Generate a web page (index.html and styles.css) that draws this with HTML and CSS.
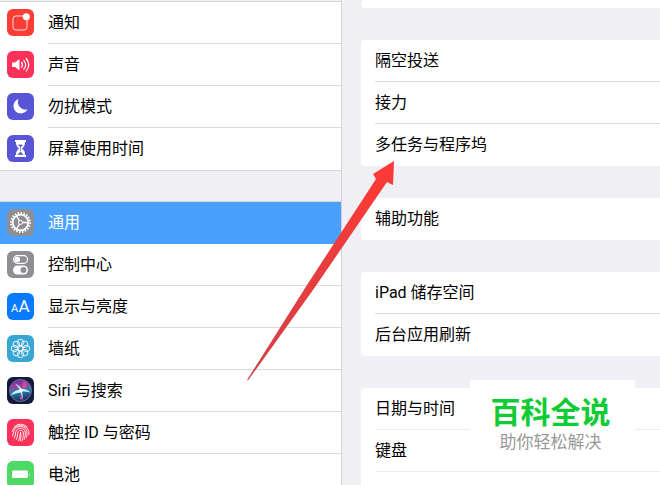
FILE: index.html
```html
<!DOCTYPE html>
<html lang="zh-CN">
<head>
<meta charset="utf-8">
<meta name="viewport" content="width=device-width, initial-scale=1">
<title>设置</title>
<link rel="stylesheet" href="styles.css">
</head>
<body>
<div class="settings">
  <nav class="sidebar">
    <ul class="menu">
      <li><a class="menu-item" href="#">
        <svg class="icon red" viewBox="0 0 27 27"><path d="M16.500 7H9a3 3 0 0 0-3 3v8a3 3 0 0 0 3 3h8a3 3 0 0 0 3-3v-7.500" fill="none" stroke="#fff" stroke-width="1" opacity=".85"/><circle cx="19.300" cy="7.700" r="3.500" fill="#fff"/></svg>
        <span class="label">通知</span></a></li>
      <li><a class="menu-item" href="#">
        <svg class="icon pink" viewBox="0 0 27 27"><path d="M5 11.500h3L12.500 8v11.500L8 16H5z" fill="#fff"/><path d="M14.500 11.300q2 2.400 0 4.900M16.800 9.300q3.600 4.400 0 8.900M19.200 7.500q5 6.200 0 12.500" fill="none" stroke="#fff" stroke-width="1.200" stroke-linecap="round"/></svg>
        <span class="label">声音</span></a></li>
      <li><a class="menu-item" href="#">
        <svg class="icon purple" viewBox="0 0 27 27"><path d="M11.500 6A7.400 7.400 0 1 0 20.500 16.300 7.600 7.600 0 0 1 11.500 6z" fill="#fff"/></svg>
        <span class="label">勿扰模式</span></a></li>
      <li><a class="menu-item" href="#">
        <svg class="icon purple" viewBox="0 0 27 27"><path d="M8 5h11v2h-1c0 3.500-1 5-3 6.500 2 1.500 3 3 3 6.500h1v2H8v-2h1c0-3.500 1-5 3-6.500C10 12 9 10.500 9 7H8z" fill="#fff"/><path d="M11.500 10h4L13.500 12zM13.500 12v4.500M13.500 17l-2.500 2.500h5z" fill="#5856d6" stroke="#5856d6" stroke-width=".7"/></svg>
        <span class="label">屏幕使用时间</span></a></li>
    </ul>
    <ul class="menu">
      <li><a class="menu-item selected" href="#" aria-current="page">
        <svg class="icon gray" viewBox="0 0 27 27"><g fill="none" stroke="#fff"><circle cx="13.500" cy="13.500" r="9.500" stroke-width="2" pathLength="80" stroke-dasharray="2 2"/><circle cx="13.500" cy="13.500" r="7.800" stroke-width="1.800"/><circle cx="13.500" cy="13.500" r="2" stroke-width="1"/><path d="M15.500 13.500H21M12.500 11.800l-3-5M12.500 15.200l-3 5" stroke-width="1.300"/></g></svg>
        <span class="label">通用</span></a></li>
      <li><a class="menu-item" href="#">
        <svg class="icon gray" viewBox="0 0 27 27"><rect x="6.500" y="4.700" width="14" height="7.600" rx="3.800" fill="none" stroke="#fff" stroke-width="1.200"/><circle cx="10.300" cy="8.500" r="2.800" fill="#fff"/><rect x="6" y="14.500" width="15" height="9" rx="4.500" fill="#fff"/><circle cx="16.500" cy="19" r="3" fill="#8e8e93"/></svg>
        <span class="label">控制中心</span></a></li>
      <li><a class="menu-item" href="#">
        <svg class="icon blue" viewBox="0 0 27 27"><text class="glyph-small" x="4" y="19">A</text><text class="glyph-large" x="11.500" y="19">A</text></svg>
        <span class="label">显示与亮度</span></a></li>
      <li><a class="menu-item" href="#">
        <svg class="icon cyan" viewBox="0 0 27 27"><g fill="none" stroke="#fff" stroke-width=".9"><circle cx="13.500" cy="7.500" r="3.200"/><circle cx="17.700" cy="9.300" r="3.200"/><circle cx="19.500" cy="13.500" r="3.200"/><circle cx="17.700" cy="17.700" r="3.200"/><circle cx="13.500" cy="19.500" r="3.200"/><circle cx="9.300" cy="17.700" r="3.200"/><circle cx="7.500" cy="13.500" r="3.200"/><circle cx="9.300" cy="9.300" r="3.200"/><circle cx="13.500" cy="13.500" r="2.400"/></g></svg>
        <span class="label">墙纸</span></a></li>
      <li><a class="menu-item" href="#">
        <svg class="icon navy" viewBox="0 0 27 27"><defs><linearGradient id="orb" x1="0" y1="0" x2=".2" y2="1"><stop offset="0" stop-color="#4b2f98"/><stop offset=".35" stop-color="#a43a9c"/><stop offset=".6" stop-color="#2a7fa8"/><stop offset="1" stop-color="#1c3566"/></linearGradient></defs><circle cx="13.500" cy="13.500" r="11" fill="url(#orb)" stroke="#7b7da5" stroke-width=".8"/><path d="M14 14L16.500 4q4 2 3 5.500z" fill="#df4c9c" opacity=".8"/><path d="M14 14l-1 8 3 1z" fill="#c44fb0"/><path d="M3.500 18.500q4-5.500 9.500-6L8 6.500q5 2.500 6.500 5.500 5-.5 9 3.500-5-1.500-8.500-1l1 7.500-2.500-6.500q-5 .5-10 3z" fill="#bff7fa"/><circle cx="14" cy="13.500" r="1.800" fill="#fff"/></svg>
        <span class="label">Siri 与搜索</span></a></li>
      <li><a class="menu-item" href="#">
        <svg class="icon pink" viewBox="0 0 27 27"><g fill="none" stroke="#fff" stroke-width=".9" stroke-linecap="round"><path d="M7 8q6.500-6 13 0M5.200 12.500C7 4.500 20 4.500 21.800 12.500v3M5.500 17c1-2 .5-4 2-6.500 3-4 9-4 11.500 0 1.500 2.500 1 5 .5 8M7.300 19c2-3 .5-5.500 2.200-7.700 2-2.600 6-2.600 8 0 1.500 2.200.8 6-.3 9.200M9.300 20.500c2-3.500.7-6.500 2.200-8.300 1.200-1.200 3-1.200 4.200 0 1.500 1.800.5 6.500-.8 9.800M11.500 21.500c1.800-3 1.500-6 2-8.300.8 2.800.4 5.800-.4 8.800"/></g></svg>
        <span class="label">触控 ID 与密码</span></a></li>
      <li><a class="menu-item" href="#">
        <svg class="icon green" viewBox="0 0 27 27"><rect x="5" y="9.500" width="16" height="7.500" rx="1.200" fill="#fff"/><path d="M22 11.500q1.500 1.700 0 3.400z" fill="#fff"/></svg>
        <span class="label">电池</span></a></li>
    </ul>
  </nav>
  <main class="detail">
    <div class="card lead"></div>
    <ul class="card">
      <li><a class="row" href="#">隔空投送</a></li>
      <li><a class="row" href="#">接力</a></li>
      <li><a class="row" href="#">多任务与程序坞</a></li>
    </ul>
    <ul class="card">
      <li><a class="row" href="#">辅助功能</a></li>
    </ul>
    <ul class="card">
      <li><a class="row" href="#">iPad 储存空间</a></li>
      <li><a class="row" href="#">后台应用刷新</a></li>
    </ul>
    <ul class="card faint">
      <li><a class="row" href="#">日期与时间</a></li>
      <li><a class="row" href="#">键盘</a></li>
      <li class="blank"></li>
    </ul>
  </main>
  <svg class="arrow" viewBox="0 0 148 222" aria-hidden="true"><defs><linearGradient id="shaft" x1="0" y1="1" x2=".6" y2="0"><stop offset="0" stop-color="#cf4148"/><stop offset="1" stop-color="#f93a37"/></linearGradient></defs><path d="M0 220L60 125 129 19 126 14 147 1 146 25 140 22 66 130 1 220.500z" fill="url(#shaft)"/></svg>
  <aside class="badge">
    <strong class="badge-title">百科全说</strong>
    <span class="badge-text">助你轻松解决</span>
  </aside>
</div>
</body>
</html>
```
FILE: styles.css
```css
* {
  box-sizing: border-box;
}

body {
  margin: 0;
  overflow: hidden;
  background: #efeff4;
  color: #000;
  font: 16px/24px Roboto, "Noto Sans CJK SC", sans-serif;
}

ul {
  list-style: none;
  margin: 0;
  padding: 0;
}

a {
  color: inherit;
  text-decoration: none;
}

.settings {
  position: relative;
  display: grid;
  grid-template-columns: 342fr 318fr;
  height: 100vh;
  overflow: hidden;
}

.sidebar {
  display: flex;
  flex-direction: column;
  gap: 32px;
  padding-top: 2px;
  border-right: 1px solid #d2d2d7;
}

.menu {
  background: #fff;
  box-shadow: 0 -1px #d5d5d9;
}

.menu-item {
  display: flex;
  align-items: center;
  gap: 14px;
  height: 42px;
  padding-left: 7px;
}

.icon {
  flex: none;
  width: 27px;
  height: 27px;
  margin-bottom: 1px;
  border-radius: 6px;
}

.label {
  flex: 1;
  height: 42px;
  line-height: 41px;
  border-bottom: 1px solid #dcdcdf;
}

.menu li:last-child .label {
  border-color: transparent;
}

.menu:first-child {
  border-bottom: 1px solid #d5d5d9;
  margin-bottom: -1px;
}

.selected {
  background: #4aa0ff;
  color: #fff;
}

.selected .label {
  border-color: transparent;
}

.red { background: #fc3d35; }
.pink { background: #fc3159; }
.purple { background: #5856d6; }
.gray { background: #8e8e93; }
.blue { background: #087aff; }
.cyan { background: #38a6d2; }
.navy { background: #141a3c; }
.green { background: #4cd964; }

.glyph-small,
.glyph-large {
  fill: #fff;
  font-family: Roboto, sans-serif;
}

.glyph-small { font-size: 11px; }
.glyph-large { font-size: 17px; }

.detail {
  display: flex;
  flex-direction: column;
  gap: 32px;
  padding-left: 19px;
}

.card {
  flex: none;
  padding-left: 14px;
  border-radius: 4px 0 0 4px;
  background: #fff;
}

.lead {
  height: 8px;
}

.row {
  display: block;
  height: 42px;
  line-height: 41px;
  border-bottom: 1px solid #dcdcdf;
}

.faint .row {
  border-color: #ececef;
}

.card li:last-child .row {
  border-color: transparent;
}

.blank {
  height: 42px;
}

.arrow {
  position: absolute;
  left: 247px;
  top: 160px;
  width: 148px;
  height: 222px;
}

.badge {
  position: absolute;
  right: 25px;
  bottom: 20px;
  display: flex;
  flex-direction: column;
  align-items: center;
  width: 165px;
  height: 85px;
  padding: 16px 4px 0 0;
  background: #fff;
}

.badge-title {
  color: #10cc34;
  font-size: 30px;
  font-weight: 700;
  line-height: 34px;
}

.badge-text {
  color: #999;
  font-size: 17px;
  line-height: 24px;
}
```
